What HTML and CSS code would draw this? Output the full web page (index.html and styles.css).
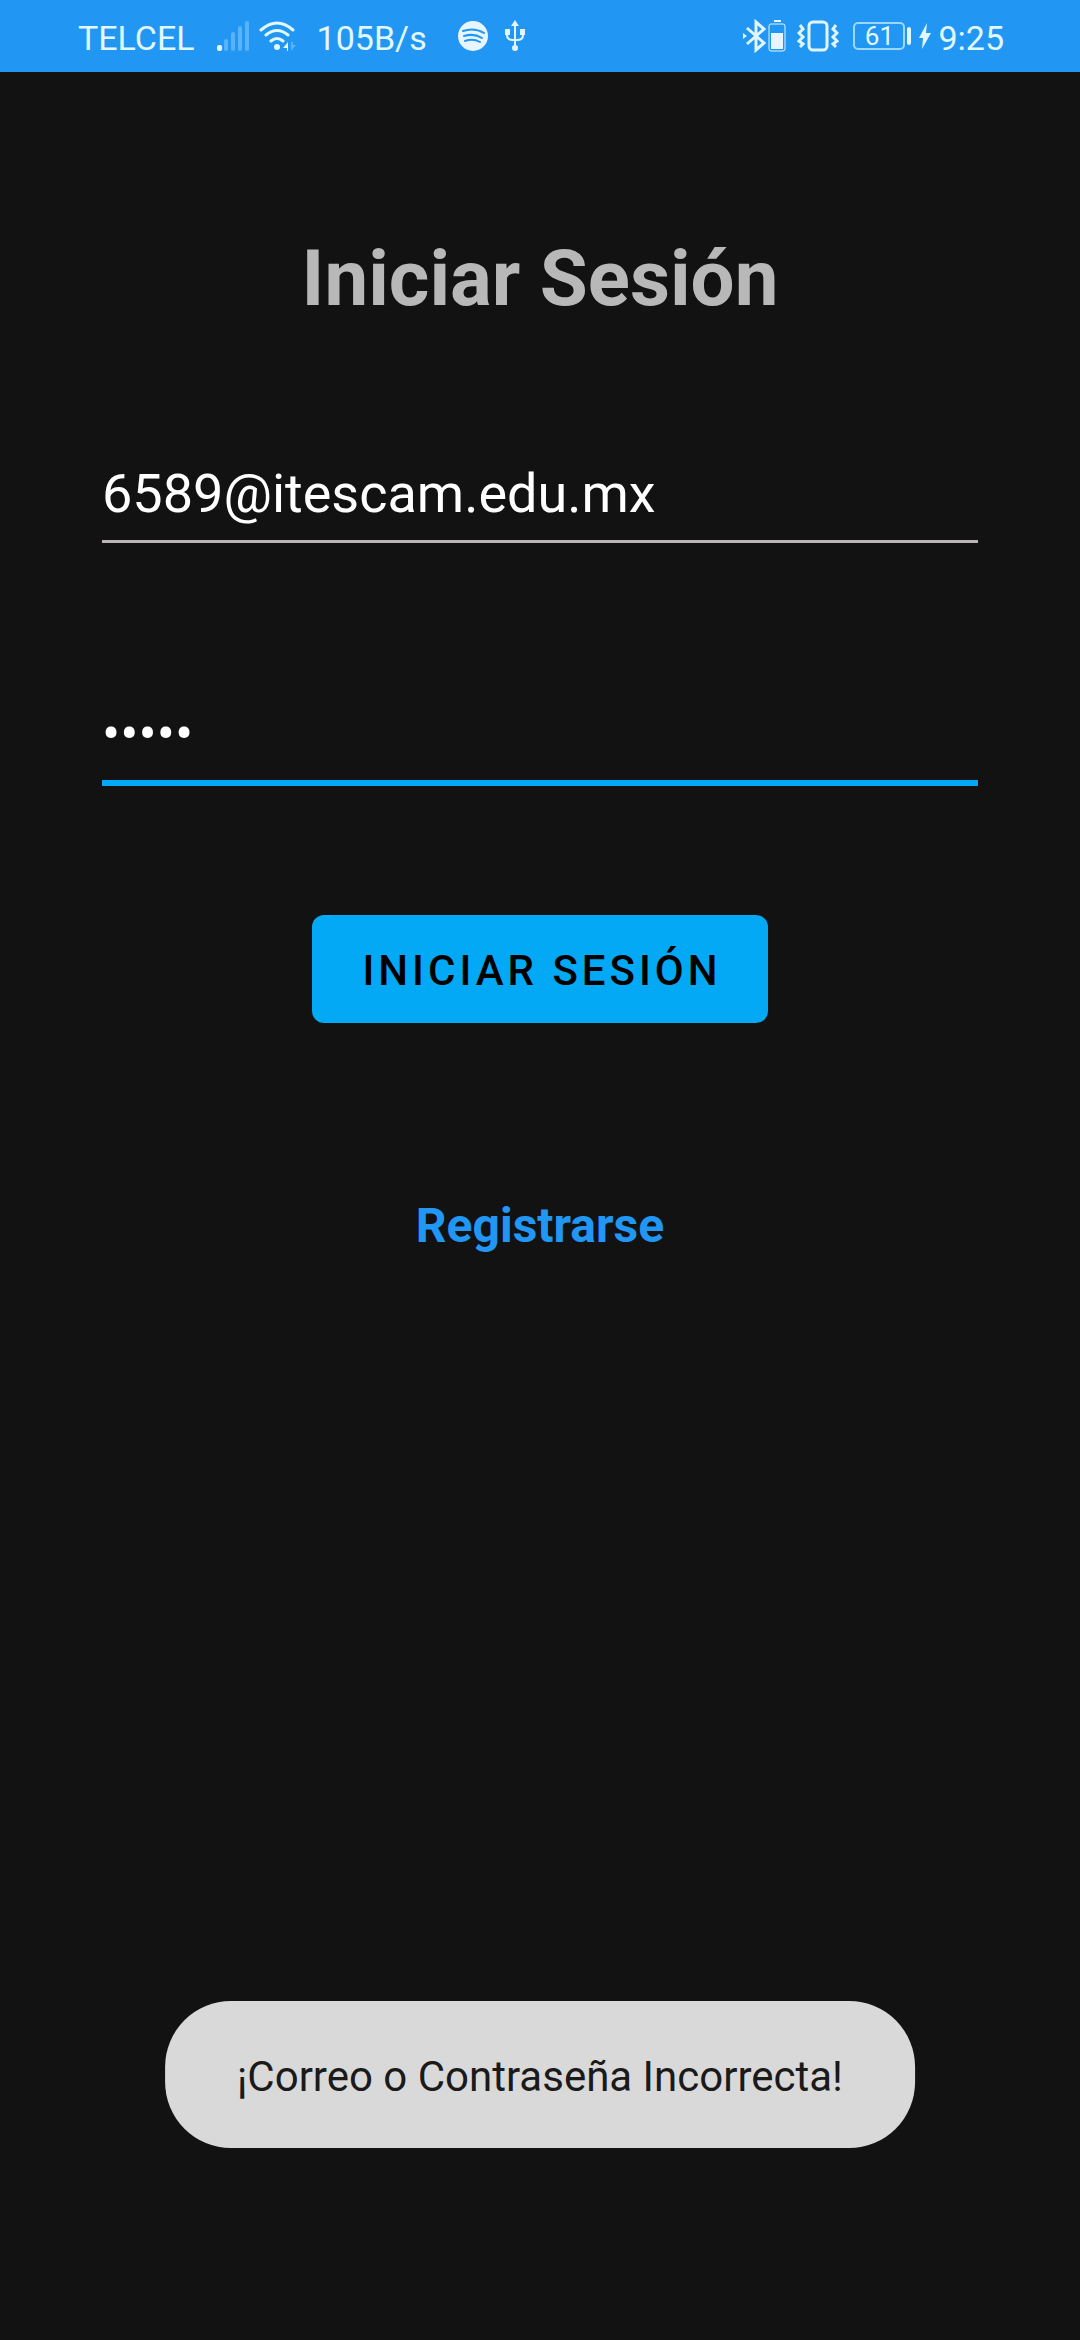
FILE: index.html
```html
<!DOCTYPE html>
<html lang="es">
<head>
<meta charset="utf-8">
<meta name="viewport" content="width=device-width, initial-scale=1">
<title>Iniciar Sesión</title>
<link rel="stylesheet" href="styles.css">
</head>
<body>
<header class="status-bar">
  <div class="status-group">
    <span class="carrier">TELCEL</span>
    <svg class="signal" width="34" height="32" viewBox="0 0 34 32" aria-hidden="true">
      <rect x="0" y="25" width="5" height="6" rx="2" fill="#e1f8ff"/>
      <g fill="#59b3fb"><rect x="7" y="19" width="4" height="12" rx="2"/><rect x="14" y="12" width="4" height="19" rx="2"/><rect x="21" y="6" width="4" height="25" rx="2"/><rect x="28" y="1" width="4" height="30" rx="2"/></g>
    </svg>
    <svg class="wifi" width="38" height="32" viewBox="0 0 38 32" fill="none" stroke="#e1f8ff" stroke-width="3" stroke-linecap="round" aria-hidden="true">
      <path d="M2 10Q18 -4 34 10M7 15Q18 6 29 15M12 21Q18 16 24 21"/>
      <circle cx="18" cy="27" r="3" fill="#e1f8ff" stroke="none"/>
      <path d="M29 22V31L28 31V28H24L29 22" fill="#e1f8ff" stroke="none"/>
      <path d="M32 22V31L37 25H34V22Z" fill="#59b3fb" stroke="none"/>
    </svg>
    <span class="speed">105B/s</span>
    <svg class="spotify" width="32" height="32" viewBox="0 0 32 32" aria-hidden="true">
      <circle cx="16" cy="16" r="15" fill="#e6f5ff"/>
      <path d="M6 11Q17 7 27 13M7 16Q17 13 25 18M8 21Q16 18 23 22" fill="none" stroke="#2196f3" stroke-width="2" stroke-linecap="round"/>
    </svg>
    <svg class="usb" width="22" height="32" viewBox="0 0 22 32" fill="#e1f5ff" aria-hidden="true">
      <path d="M11 0L15 6H7Z"/><circle cx="11" cy="28" r="3"/><rect x="1" y="9" width="5" height="6"/><rect x="16" y="9" width="5" height="6"/>
      <path d="M11 4V27M3 13V15Q3 20 9 20H13Q19 20 19 15V13" fill="none" stroke="#e1f5ff" stroke-width="2"/>
    </svg>
  </div>
  <div class="status-group">
    <svg class="bluetooth" width="44" height="34" viewBox="0 0 44 34" fill="none" stroke="#e1f5ff" aria-hidden="true">
      <path d="M4 9L21 24L13 31V3L21 10L4 25" stroke-width="3"/>
      <path d="M0 14L4 17L0 20Z" fill="#e1f5ff" stroke="none"/>
      <rect x="26" y="5" width="16" height="27" rx="2" stroke-width="1"/>
      <path d="M31 1H38V3H31ZM28 14H40V30H28Z" fill="#e6f5ff" stroke="none"/>
    </svg>
    <svg class="vibrate" width="42" height="34" viewBox="0 0 42 34" fill="none" stroke="#e1f5ff" stroke-width="3" aria-hidden="true">
      <rect x="12" y="3" width="18" height="28" rx="4"/>
      <path d="M3 6L6 10L2 14L6 18L2 22L6 25L3 28M39 6L36 10L40 14L36 18L40 22L36 25L39 28"/>
    </svg>
    <span class="battery"><span class="battery-level">61</span></span>
    <svg class="bolt" width="14" height="26" viewBox="0 0 14 26" fill="#e1f8ff" aria-hidden="true"><path d="M9 0L1 15H5L4 26L13 10H8Z"/></svg>
    <time class="clock">9:25</time>
  </div>
</header>
<main>
  <form class="login">
    <h1 class="title">Iniciar Sesión</h1>
    <input class="field field-email" type="email" aria-label="Correo" value="6589@itescam.edu.mx">
    <input class="field field-password" type="password" aria-label="Contraseña" value="12345">
    <button class="submit" type="button">INICIAR SESIÓN</button>
    <a class="register" href="#registro">Registrarse</a>
  </form>
</main>
<div class="toast" role="alert">¡Correo o Contraseña Incorrecta!</div>
</body>
</html>
```

FILE: styles.css
```css
* {
  box-sizing: border-box;
}

body {
  margin: 0;
  min-height: 100vh;
  background: #121212;
  font-family: Roboto, "Liberation Sans", sans-serif;
}

.status-bar {
  display: flex;
  justify-content: space-between;
  align-items: center;
  height: 72px;
  padding: 0 76px 0 78px;
  background: #2196f3;
  color: #e1f8ff;
  font-size: 34px;
  line-height: 42px;
}

.status-group {
  display: flex;
  align-items: center;
}

.carrier,
.speed,
.clock {
  padding-top: 4px;
}

.signal {
  margin-left: 22px;
}

.wifi {
  margin-left: 8px;
}

.speed {
  margin-left: 20px;
}

.spotify {
  margin-left: 30px;
}

.usb {
  margin-left: 15px;
}

.vibrate {
  margin-left: 10px;
}

.battery {
  display: flex;
  align-items: center;
  margin-left: 14px;
}

.battery::after {
  content: "";
  width: 4px;
  height: 18px;
  margin-left: 2px;
  border-radius: 2px;
  background: #e1f8ff;
}

.battery-level {
  width: 52px;
  height: 28px;
  border: 2px solid #9cd7ff;
  border-radius: 5px;
  font-size: 26px;
  line-height: 25px;
  text-align: center;
}

.bolt {
  margin-left: 7px;
}

.clock {
  margin-left: 6px;
}

.login {
  display: flex;
  flex-direction: column;
  align-items: center;
  padding: 161px 102px 0;
}

.title {
  margin: 0;
  color: #b8b8b8;
  font-size: 78px;
  line-height: 92px;
  font-weight: 700;
}

.field {
  width: 100%;
  padding: 0 0 15px;
  border: 0;
  border-radius: 0;
  outline: 0;
  background: transparent;
  color: #fff;
  font-family: inherit;
  font-size: 54px;
  line-height: 64px;
}

.field-email {
  height: 82px;
  margin-top: 136px;
  border-bottom: 3px solid #b8b4b8;
}

.field-password {
  height: 85px;
  margin-top: 158px;
  border-bottom: 6px solid #03a9f4;
}

.submit {
  height: 108px;
  margin-top: 129px;
  padding: 2px 46px 0 50px;
  border: 0;
  border-radius: 12px;
  background: #03a9f4;
  color: #000;
  font-family: inherit;
  font-size: 42px;
  font-weight: 500;
  letter-spacing: 4px;
  white-space: nowrap;
}

.register {
  margin-top: 175px;
  color: #2196f3;
  font-size: 48px;
  line-height: 56px;
  font-weight: 700;
  text-decoration: none;
}

.toast {
  position: fixed;
  bottom: 192px;
  left: 50%;
  transform: translateX(-50%);
  padding: 51px 72px 46px;
  border-radius: 66px;
  background: #d9d9d9;
  color: #1a1a1a;
  font-size: 42px;
  line-height: 50px;
  white-space: nowrap;
}
```
